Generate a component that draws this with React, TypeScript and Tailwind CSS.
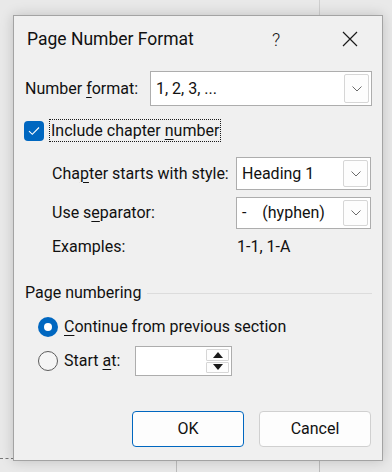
import { Fragment } from "react";

const font = "font-['Segoe_UI',Roboto,'Noto_Sans',sans-serif]";

// small chevron used inside the combo boxes
const Chevron = () => (
    <svg width="10" height="6" viewBox="0 0 10 6" fill="none">
        <path d="M0.5 0.5 L5 5 L9.5 0.5" stroke="#6b6b6b" strokeWidth="1" />
    </svg>
);

interface ComboProps {
    value: string
    width: string
    height: string
}

const Combo = ({ value, width, height }: ComboProps) => {
    return (
        <div className={`${width} ${height} flex items-center bg-white border border-[#adadad] pl-[5px] pr-[2px] py-[2px]`}>
            <span className="flex-1 text-[16px] text-[#111] whitespace-pre">{value}</span>
            <div className="w-[25px] h-full flex items-center justify-center border border-[#d6d6d6] rounded-[2px] bg-[#fdfdfd]">
                <Chevron />
            </div>
        </div>
    );
};

// label text with one underlined mnemonic letter
const Label = ({ before, key_, after }: { before: string, key_: string, after: string }) => (
    <span className="whitespace-pre">
        {before}<span className="underline underline-offset-[3px] decoration-1">{key_}</span>{after}
    </span>
);

const App = () => {
    return (
        <div className={`relative w-[392px] h-[472px] bg-[#e9e9e9] overflow-hidden ${font}`}>
            {/* desktop behind the dialog */}
            <div className="absolute left-[319px] top-0 w-px h-[16px] bg-[#cfcfcf]" />
            <div className="absolute left-[176px] top-[461px] w-px h-[11px] bg-[#bdbdbd]" />
            <div className="absolute left-[319px] top-[461px] w-px h-[11px] bg-[#bdbdbd]" />
            <div className="absolute left-0 top-[458px] w-[14px] border-t border-dashed border-[#777]" />

            {/* Dialog window */}
            <div className="absolute left-[13px] top-[15px] w-[370px] h-[446px] bg-[#f0f0f0] border border-[#a3a3a3] shadow-[0_0_12px_rgba(0,0,0,0.18)] flex flex-col text-[#111]">
                {/* Title bar */}
                <div className="h-[46px] flex items-center pl-[13px] shrink-0">
                    <span className="text-[17.5px] flex-1">Page Number Format</span>
                    <span className="text-[18px] w-[16px] text-center mr-[58px] font-light">?</span>
                    <svg width="16" height="16" viewBox="0 0 16 16" className="mr-[24px]">
                        <path d="M1 1 L15 15 M15 1 L1 15" stroke="#1a1a1a" strokeWidth="1.2" />
                    </svg>
                </div>

                {/* Number format */}
                <div className="mt-[9px] h-[35px] flex items-center pl-[11px] text-[16px]">
                    <span className="w-[125px]"><Label before="Number " key_="f" after="ormat:" /></span>
                    <Combo value="1, 2, 3, ..." width="w-[222px]" height="h-[35px]" />
                </div>

                {/* Include chapter number */}
                <div className="mt-[13px] h-[23px] flex items-center pl-[10px]">
                    <div className="w-[20px] h-[20px] rounded-[4px] bg-[#0067c0] flex items-center justify-center">
                        <svg width="12" height="10" viewBox="0 0 12 10" fill="none">
                            <path d="M1 5.2 L4.3 8.3 L11 1.5" stroke="white" strokeWidth="1.1" />
                        </svg>
                    </div>
                    <div className="ml-[5px] h-[23px] px-[1px] flex items-center border border-dotted border-[#1a1a1a] text-[16px]">
                        <Label before="Include chapter " key_="n" after="umber" />
                    </div>
                </div>

                {/* Chapter starts with style */}
                <div className="mt-[15px] h-[33px] flex items-center pl-[38px] text-[16px]">
                    <span className="w-[184px]"><Label before="Cha" key_="p" after="ter starts with style:" /></span>
                    <Combo value="Heading 1" width="w-[135px]" height="h-[33px]" />
                </div>

                {/* Separator */}
                <div className="mt-[7px] h-[32px] flex items-center pl-[38px] text-[16px]">
                    <span className="w-[184px]"><Label before="Use s" key_="e" after="parator:" /></span>
                    <Combo value={"-    (hyphen)"} width="w-[135px]" height="h-[32px]" />
                </div>

                {/* Examples */}
                <div className="mt-[8px] h-[20px] flex items-center pl-[38px] text-[16px]">
                    <span className="w-[185px]">Examples:</span>
                    <span>1-1, 1-A</span>
                </div>

                {/* Page numbering group */}
                <div className="mt-[26px] h-[20px] flex items-center pl-[11px] pr-[10px] text-[16px]">
                    <span>Page numbering</span>
                    <div className="flex-1 ml-[6px] h-px bg-[#dcdcdc]" />
                </div>

                <div className="mt-[13px] h-[22px] flex items-center pl-[24px] text-[16px]">
                    <div className="w-[20px] h-[20px] rounded-full bg-[#0067c0] flex items-center justify-center">
                        <div className="w-[8px] h-[8px] rounded-full bg-white" />
                    </div>
                    <span className="ml-[6px]"><Label before="" key_="C" after="ontinue from previous section" /></span>
                </div>

                <div className="mt-[8px] h-[30px] flex items-center pl-[24px] text-[16px]">
                    <div className="w-[20px] h-[20px] rounded-full border border-[#5c5c5c] bg-[#f5f5f5]" />
                    <span className="ml-[6px] w-[71px]"><Label before="Start " key_="a" after="t:" /></span>
                    <div className="w-[97px] h-[30px] bg-white border border-[#adadad] flex justify-end p-[2px]">
                        <div className="w-[23px] flex flex-col gap-[1px]">
                            <div className="flex-1 flex items-center justify-center border border-[#d6d6d6] rounded-[1px] bg-[#fdfdfd]">
                                <svg width="10" height="6" viewBox="0 0 10 6"><path d="M5 0 L10 6 L0 6 Z" fill="#1a1a1a" /></svg>
                            </div>
                            <div className="flex-1 flex items-center justify-center border border-[#d6d6d6] rounded-[1px] bg-[#fdfdfd]">
                                <svg width="10" height="6" viewBox="0 0 10 6"><path d="M0 0 L10 0 L5 6 Z" fill="#1a1a1a" /></svg>
                            </div>
                        </div>
                    </div>
                </div>

                {/* Buttons */}
                <div className="mt-[35px] flex justify-end gap-[15px] pr-[11px]">
                    <button className="w-[112px] h-[36px] rounded-[4px] bg-[#fdfdfd] border border-[#0067c0] text-[16px] text-[#111]">OK</button>
                    <button className="w-[112px] h-[36px] rounded-[4px] bg-[#fdfdfd] border border-[#d0d0d0] text-[16px] text-[#111]">Cancel</button>
                </div>
            </div>
        </div>
    );
};

export default App;
